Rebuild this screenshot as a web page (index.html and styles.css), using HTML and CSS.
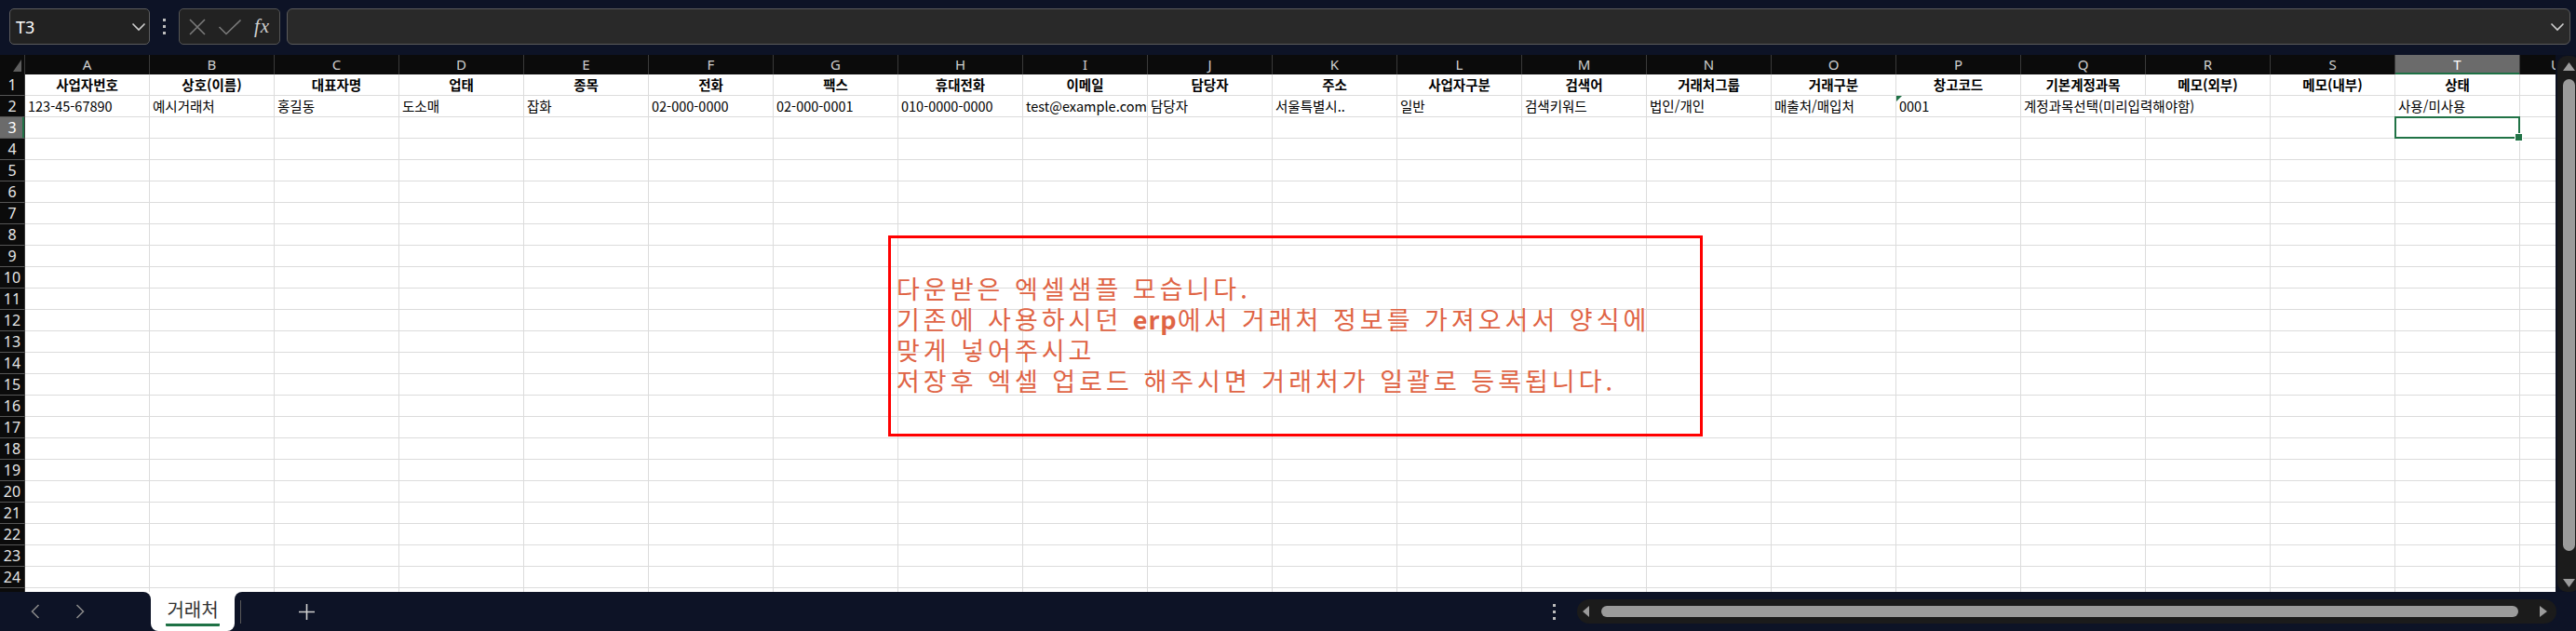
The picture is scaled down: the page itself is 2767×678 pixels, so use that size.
FILE: index.html
```html
<!DOCTYPE html>
<html lang="ko">
<head>
<meta charset="utf-8">
<title>거래처</title>
<link rel="stylesheet" href="styles.css">
</head>
<body>
<div class="app">
  <header class="topbar">
    <div class="namebox">
      <span class="ref">T3</span>
      <svg class="chev" width="16" height="10" viewBox="0 0 16 10"><polyline points="1.5,1.5 8,8 14.5,1.5" fill="none" stroke="#cfcfcf" stroke-width="1.6"/></svg>
    </div>
    <div class="vdots"><span></span><span></span><span></span></div>
    <div class="fxbox">
      <svg class="ico" width="20" height="18" viewBox="0 0 20 18"><path d="M2 1 L18 17 M18 1 L2 17" stroke="#7a7a7a" stroke-width="1.6" fill="none"/></svg>
      <svg class="ico chk" width="26" height="18" viewBox="0 0 26 18"><polyline points="1.5,9 9,16.5 24.5,1.5" fill="none" stroke="#7a7a7a" stroke-width="1.6"/></svg>
      <span class="fx">fx</span>
    </div>
    <div class="formula">
      <svg width="16" height="10" viewBox="0 0 16 10"><polyline points="1.5,1.5 8,8 14.5,1.5" fill="none" stroke="#cfcfcf" stroke-width="1.6"/></svg>
    </div>
  </header>

  <main class="main">
    <div class="sheet">
      <div class="hrow">
        <div class="corner"></div>
        <div class="colh">A</div><div class="colh">B</div><div class="colh">C</div><div class="colh">D</div><div class="colh">E</div>
        <div class="colh">F</div><div class="colh">G</div><div class="colh">H</div><div class="colh">I</div><div class="colh">J</div>
        <div class="colh">K</div><div class="colh">L</div><div class="colh">M</div><div class="colh">N</div><div class="colh">O</div>
        <div class="colh">P</div><div class="colh">Q</div><div class="colh">R</div><div class="colh">S</div><div class="colh on">T</div>
        <div class="colh part">U</div>
      </div>

      <div class="row">
        <div class="rh">1</div>
        <div class="c h">사업자번호</div><div class="c h">상호(이름)</div><div class="c h">대표자명</div><div class="c h">업태</div><div class="c h">종목</div>
        <div class="c h">전화</div><div class="c h">팩스</div><div class="c h">휴대전화</div><div class="c h">이메일</div><div class="c h">담당자</div>
        <div class="c h">주소</div><div class="c h">사업자구분</div><div class="c h">검색어</div><div class="c h">거래처그룹</div><div class="c h">거래구분</div>
        <div class="c h">창고코드</div><div class="c h">기본계정과목</div><div class="c h">메모(외부)</div><div class="c h">메모(내부)</div><div class="c h">상태</div>
        <div class="c u"></div>
      </div>

      <div class="row">
        <div class="rh">2</div>
        <div class="c">123-45-67890</div><div class="c">예시거래처</div><div class="c">홍길동</div><div class="c">도소매</div><div class="c">잡화</div>
        <div class="c">02-000-0000</div><div class="c">02-000-0001</div><div class="c">010-0000-0000</div><div class="c">test@example.com</div><div class="c">담당자</div>
        <div class="c">서울특별시..</div><div class="c">일반</div><div class="c">검색키워드</div><div class="c">법인/개인</div><div class="c">매출처/매입처</div>
        <div class="c flag">0001</div><div class="c over">계정과목선택(미리입력해야함)</div><div class="c"></div><div class="c"></div><div class="c">사용/미사용</div>
        <div class="c u"></div>
      </div>

      <div class="row">
        <div class="rh on">3</div>
        <div class="c"></div><div class="c"></div><div class="c"></div><div class="c"></div><div class="c"></div>
        <div class="c"></div><div class="c"></div><div class="c"></div><div class="c"></div><div class="c"></div>
        <div class="c"></div><div class="c"></div><div class="c"></div><div class="c"></div><div class="c"></div>
        <div class="c"></div><div class="c"></div><div class="c"></div><div class="c"></div><div class="c sel"></div>
        <div class="c u"></div>
      </div>

      <div class="row"><div class="rh">4</div><div class="fill"></div></div>
      <div class="row"><div class="rh">5</div><div class="fill"></div></div>
      <div class="row"><div class="rh">6</div><div class="fill"></div></div>
      <div class="row"><div class="rh">7</div><div class="fill"></div></div>
      <div class="row"><div class="rh">8</div><div class="fill"></div></div>
      <div class="row"><div class="rh">9</div><div class="fill"></div></div>
      <div class="row"><div class="rh">10</div><div class="fill"></div></div>
      <div class="row"><div class="rh">11</div><div class="fill"></div></div>
      <div class="row"><div class="rh">12</div><div class="fill"></div></div>
      <div class="row"><div class="rh">13</div><div class="fill"></div></div>
      <div class="row"><div class="rh">14</div><div class="fill"></div></div>
      <div class="row"><div class="rh">15</div><div class="fill"></div></div>
      <div class="row"><div class="rh">16</div><div class="fill"></div></div>
      <div class="row"><div class="rh">17</div><div class="fill"></div></div>
      <div class="row"><div class="rh">18</div><div class="fill"></div></div>
      <div class="row"><div class="rh">19</div><div class="fill"></div></div>
      <div class="row"><div class="rh">20</div><div class="fill"></div></div>
      <div class="row"><div class="rh">21</div><div class="fill"></div></div>
      <div class="row"><div class="rh">22</div><div class="fill"></div></div>
      <div class="row"><div class="rh">23</div><div class="fill"></div></div>
      <div class="row"><div class="rh">24</div><div class="fill"></div></div>
      <div class="row"><div class="rh"></div><div class="fill"></div></div>

      <div class="note">
        다운받은 엑셀샘플 모습니다.<br>
        기존에 사용하시던 <b>erp</b>에서 거래처 정보를 가져오서서 양식에<br>
        맞게 넣어주시고<br>
        저장후 엑셀 업로드 해주시면 거래처가 일괄로 등록됩니다.
      </div>
    </div>

    <div class="vscroll">
      <div class="vtrack">
        <div class="arr up"></div>
        <div class="vthumb"></div>
        <div class="arr down"></div>
      </div>
    </div>
  </main>

  <footer class="tabbar">
    <div class="nav">
      <svg width="10" height="16" viewBox="0 0 10 16"><polyline points="8.5,1 1.5,8 8.5,15" fill="none" stroke="#8a8a8a" stroke-width="1.5"/></svg>
      <svg width="10" height="16" viewBox="0 0 10 16"><polyline points="1.5,1 8.5,8 1.5,15" fill="none" stroke="#8a8a8a" stroke-width="1.5"/></svg>
    </div>
    <div class="tab"><span>거래처</span></div>
    <div class="rest">
      <div class="sep"></div>
      <svg class="plus" width="17" height="17" viewBox="0 0 17 17"><path d="M8.5 0 V17 M0 8.5 H17" stroke="#d0d0d0" stroke-width="1.6"/></svg>
      <div class="spacer"></div>
      <div class="hdots"><span></span><span></span><span></span></div>
      <div class="htrack">
        <div class="arr left"></div>
        <div class="hthumb"></div>
        <div class="arr right"></div>
      </div>
    </div>
  </footer>
</div>
</body>
</html>
```
FILE: styles.css
```css
* { box-sizing: border-box; margin: 0; padding: 0; }
html, body { width: 2767px; height: 678px; overflow: hidden; }
body {
  background: #0d1326;
  font-family: "Noto Sans CJK KR", "Noto Sans", sans-serif;
}
.app { display: flex; flex-direction: column; width: 2767px; height: 678px; }

/* ---------- top bar ---------- */
.topbar {
  flex: 0 0 59px;
  display: flex;
  align-items: flex-start;
  padding: 9px 6px 0 10px;
  background: #0d1326;
}
.namebox {
  width: 151px; height: 39px;
  background: #222222;
  border: 1px solid #5c5c5c;
  border-radius: 5px;
  display: flex; align-items: center; justify-content: space-between;
  padding: 0 3px 0 6px;
}
.ref { color: #ffffff; font-family: "Noto Sans", sans-serif; font-size: 18px; }
.vdots {
  width: 31px; height: 39px;
  display: flex; flex-direction: column; align-items: center; justify-content: center; gap: 4px;
}
.vdots span { width: 3px; height: 3px; background: #bdbdbd; }
.fxbox {
  width: 109px; height: 39px;
  background: #222222;
  border: 1px solid #555555;
  border-radius: 5px;
  display: flex; align-items: center;
  padding-left: 9px;
}
.fxbox .chk { margin-left: 12px; }
.fx {
  margin-left: 13px;
  font-family: "Liberation Serif", serif;
  font-style: italic;
  font-size: 21px;
  color: #cfcfcf;
  letter-spacing: 1px;
}
.formula {
  flex: 1; height: 39px;
  margin-left: 7px;
  background: #292929;
  border: 1px solid #5b5b5b;
  border-radius: 6px;
  display: flex; align-items: center; justify-content: flex-end;
  padding-right: 5px;
}

/* ---------- sheet ---------- */
.main { flex: 0 0 577px; display: flex; }
.sheet {
  width: 2745px; height: 577px;
  position: relative;
  overflow: hidden;
  background: #ffffff;
}
.hrow { display: flex; height: 21px; background: #0b0b0b; }
.corner { flex: 0 0 27px; border-right: 1px solid #3a3a3a; position: relative; }
.corner::after {
  content: ""; position: absolute; right: 3px; bottom: 3px;
  width: 9px; height: 13px; background: #5e5e5e;
  clip-path: polygon(100% 0, 100% 100%, 0 100%);
}
.colh {
  flex: 0 0 134px;
  border-right: 1px solid #3a3a3a;
  color: #cfcfcf;
  font-family: "Noto Sans", sans-serif;
  font-size: 15px; line-height: 21px;
  text-align: center;
}
.colh.on { background: #6b6b6b; color: #ffffff; box-shadow: inset 0 -2px #1e7145; }
.colh.part { flex: 0 0 38px; border-right: 0; text-align: left; padding-left: 33px; overflow: hidden; }

.row { display: flex; height: 23px; }
.rh {
  flex: 0 0 27px;
  background: #0b0b0b;
  border-right: 1px solid #3a3a3a;
  border-bottom: 1px solid #555555;
  color: #e6e6e6;
  font-family: "Noto Sans", sans-serif;
  font-size: 16px; line-height: 22px;
  text-align: center;
}
.rh.on { background: #6b6b6b; color: #ffffff; box-shadow: inset -2px 0 #1e7145; }
.c {
  flex: 0 0 134px;
  min-width: 0;
  border-right: 1px solid #dcdcdc;
  border-bottom: 1px solid #dcdcdc;
  font-size: 14.5px; line-height: 22px;
  padding: 0 3px;
  white-space: nowrap;
  overflow: hidden;
  color: #000000;
}
.c.h { font-weight: 700; text-align: center; }
.c.u { flex: 0 0 38px; border-right: 0; }
.c.over { overflow: visible; border-right-color: transparent; position: relative; z-index: 1; }
.c.flag { position: relative; }
.c.flag::before {
  content: ""; position: absolute; left: 0; top: 0;
  width: 6px; height: 6px; background: #1e7145;
  clip-path: polygon(0 0, 100% 0, 0 100%);
}
.c.sel { position: relative; overflow: visible; }
.c.sel::before {
  content: ""; position: absolute; left: -1px; top: -1px; right: -1px; bottom: -1px;
  border: 2px solid #217346;
}
.c.sel::after {
  content: ""; position: absolute; right: -4px; bottom: -4px;
  width: 7px; height: 7px; background: #217346; border: 1px solid #ffffff;
}
.fill {
  flex: 0 0 2718px;
  border-bottom: 1px solid #dcdcdc;
  background: repeating-linear-gradient(90deg, transparent 0 133px, #dcdcdc 133px 134px);
}

/* floating text box */
.note {
  position: absolute;
  left: 954px; top: 194px;
  width: 875px; height: 216px;
  border: 3px solid #ff0000;
  padding: 37px 0 0 6px;
  color: #df6445;
  font-size: 27px;
  line-height: 33px;
  letter-spacing: 4px;
  white-space: nowrap;
}
.note b { font-weight: 700; letter-spacing: 1px; }

/* vertical scrollbar */
.vscroll { flex: 0 0 22px; background: #0b1020; padding: 1px 0 0 2px; overflow: hidden; }
.vtrack {
  width: 24px; height: 576px;
  background: #1b1b1b;
  border-radius: 10px;
  display: flex; flex-direction: column; align-items: flex-start;
  padding: 7px 0 0 6px;
}
.arr { background: #9b9b9b; }
.arr.up { width: 13px; height: 9px; clip-path: polygon(50% 0, 100% 100%, 0 100%); }
.vthumb { width: 13px; height: 507px; margin-top: 9px; background: #9b9b9b; border-radius: 7px; }
.arr.down { width: 13px; height: 9px; margin-top: 30px; clip-path: polygon(0 0, 100% 0, 50% 100%); }

/* ---------- tab bar ---------- */
.tabbar {
  flex: 0 0 42px;
  display: flex;
  background: linear-gradient(#ffffff 0 50%, #0d1326 50%);
}
.nav {
  width: 162px;
  background: #0d1326;
  border-top-right-radius: 8px;
  display: flex; align-items: center;
  padding-left: 33px; gap: 38px;
}
.tab {
  width: 90px;
  background: #ffffff;
  border-radius: 0 0 8px 8px;
  display: flex; justify-content: center; align-items: flex-start;
  padding-top: 7px;
}
.tab span {
  font-size: 20px; line-height: 24px;
  color: #333333;
  border-bottom: 3px solid #1e7145;
  border-radius: 1px;
  padding: 0 1px 3px;
}
.rest {
  flex: 1;
  background: #0d1326;
  border-top-left-radius: 8px;
  display: flex; align-items: center;
}
.sep { width: 1px; height: 25px; background: #5a5a5a; margin-left: 6px; }
.plus { margin-left: 62px; }
.spacer { flex: 1; }
.hdots { display: flex; flex-direction: column; gap: 4px; margin-right: 23px; }
.hdots span { width: 3px; height: 3px; background: #bdbdbd; }
.htrack {
  width: 1052px; height: 26px;
  margin-right: 21px;
  background: #1b1b1b;
  border-radius: 13px;
  display: flex; align-items: center;
  padding-left: 6px;
}
.arr.left { width: 7px; height: 12px; clip-path: polygon(100% 0, 100% 100%, 0 50%); }
.hthumb { width: 985px; height: 12px; margin-left: 13px; background: #9b9b9b; border-radius: 6px; }
.arr.right { width: 8px; height: 12px; margin-left: 23px; clip-path: polygon(0 0, 100% 50%, 0 100%); }
```
